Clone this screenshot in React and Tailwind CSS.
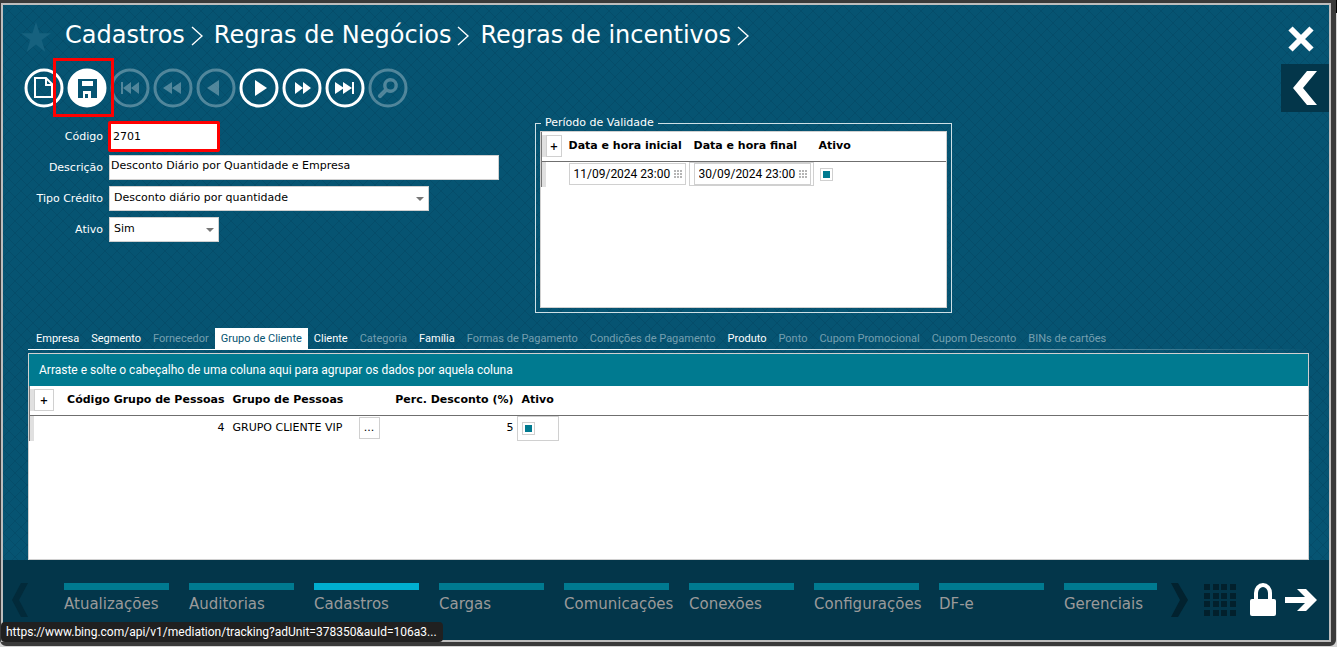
import { useState } from 'react';

const navItems = [
  'Atualizações', 'Auditorias', 'Cadastros', 'Cargas', 'Comunicações',
  'Conexões', 'Configurações', 'DF-e', 'Gerenciais',
];

const tabs = [
  { label: 'Empresa', enabled: true },
  { label: 'Segmento', enabled: true },
  { label: 'Fornecedor', enabled: false },
  { label: 'Grupo de Cliente', enabled: true },
  { label: 'Cliente', enabled: true },
  { label: 'Categoria', enabled: false },
  { label: 'Família', enabled: true },
  { label: 'Formas de Pagamento', enabled: false },
  { label: 'Condições de Pagamento', enabled: false },
  { label: 'Produto', enabled: true },
  { label: 'Ponto', enabled: false },
  { label: 'Cupom Promocional', enabled: false },
  { label: 'Cupom Desconto', enabled: false },
  { label: 'BINs de cartões', enabled: false },
];

const toolbar = [
  { id: 'first', label: 'Primeiro', enabled: false, d: 'M11 14h2v12h-2zM21 14v12l-8-6zM29 14v12l-8-6z' },
  { id: 'fastBack', label: 'Retroceder', enabled: false, d: 'M19 14v12l-9-6zM28 14v12l-9-6z' },
  { id: 'prev', label: 'Anterior', enabled: false, d: 'M23 12v16l-12-8z' },
  { id: 'next', label: 'Próximo', enabled: true, d: 'M16 12v16l12-8z' },
  { id: 'fastForward', label: 'Avançar', enabled: true, d: 'M13 14v12l8-6zM21 14v12l8-6z' },
  { id: 'last', label: 'Último', enabled: true, d: 'M10 14v12l9-6zM18 14v12l9-6zM27 14h2v12h-2z' },
];

const labelClass = 'text-right text-[11px] leading-4 text-white';
const fieldClass = 'block h-[25px] border border-[#d0d0d0] bg-white text-[11px] text-black focus:outline-none';
const plusClass = 'flex h-[22px] items-center justify-center border border-[#d0d0d0] bg-white text-[10px]';

function Hatch() {
  return (
    <svg className="absolute inset-0 h-full w-full" aria-hidden="true">
      <defs>
        <pattern id="hatch" width="12" height="12" patternUnits="userSpaceOnUse">
          <path d="M0 0l12 12M12 0L0 12" stroke="#054d6a" strokeWidth="1" />
        </pattern>
      </defs>
      <rect width="100%" height="100%" fill="url(#hatch)" />
    </svg>
  );
}

function Crumb({ children }) {
  return (
    <li className="flex items-center gap-1.5">
      <a href="#crumb">{children}</a>
      <svg width="12" height="20" viewBox="0 0 12 20" fill="none" stroke="white" className="mt-0.5" aria-hidden="true">
        <path d="M1 1l10 9L1 19" strokeWidth="1.4" />
      </svg>
    </li>
  );
}

function Circle({ label, enabled = true, solid = false, children }) {
  return (
    <button type="button" aria-label={label} disabled={!enabled} className={`block ${enabled ? 'text-white' : 'text-white/30'}`}>
      <svg width="40" height="40" viewBox="0 0 40 40" fill="currentColor" aria-hidden="true">
        <circle cx="20" cy="20" r="18" fill={solid ? 'white' : 'none'} stroke="currentColor" strokeWidth="3" />
        {children}
      </svg>
    </button>
  );
}

function Check({ label }) {
  const [on, setOn] = useState(true);
  return (
    <input
      type="checkbox"
      aria-label={label}
      checked={on}
      onChange={() => setOn(!on)}
      className="block h-[13px] w-[13px] appearance-none border border-[#d0d0d0] bg-white bg-clip-content p-[2px] checked:bg-[#007a90]"
    />
  );
}

function Select({ id, options, width }) {
  return (
    <div className={`relative ${width}`}>
      <select id={id} className={`w-full appearance-none pl-1 ${fieldClass}`}>
        {options.map((o) => <option key={o}>{o}</option>)}
      </select>
      <svg width="8" height="4" viewBox="0 0 8 4" className="pointer-events-none absolute right-[5px] top-[11px]" aria-hidden="true">
        <path d="M0 0h8L4 4z" fill="#777" />
      </svg>
    </div>
  );
}

function DateField({ label, value }) {
  return (
    <div className="flex h-[22px] w-[117px] items-center justify-between border border-[#d0d0d0] bg-white pl-1 pr-[3px]">
      <input aria-label={label} defaultValue={value} className="w-[98px] font-['Roboto',sans-serif] text-[12px] focus:outline-none" />
      <svg width="8" height="8" viewBox="0 0 8 8" fill="#b5b5b5" aria-hidden="true">
        <path d="M0 0h2v2H0zM3 0h2v2H3zM6 0h2v2H6zM0 3h2v2H0zM3 3h2v2H3zM6 3h2v2H6zM0 6h2v2H0zM3 6h2v2H3zM6 6h2v2H6z" />
      </svg>
    </div>
  );
}

function Header() {
  return (
    <header className="flex items-start justify-between pb-[11px] pl-[18px]">
      <div className="flex items-center pt-3">
        <svg width="30" height="30" viewBox="0 0 30 30" className="mt-1" aria-hidden="true">
          <path d="M15 0l3.600 11.200H30l-9.300 6.800L24.300 30 15 22.500 5.700 30l3.600-12L0 11.200h11.400z" fill="#16617e" />
        </svg>
        <ol className="flex gap-[11px] pl-3.5 text-[24px] leading-9 text-white">
          <Crumb>Cadastros</Crumb>
          <Crumb>Regras de Negócios</Crumb>
          <Crumb>Regras de incentivos</Crumb>
        </ol>
      </div>
      <button type="button" aria-label="Fechar" className="mr-[15px] mt-[21px]">
        <svg width="26" height="26" viewBox="0 0 26 26" stroke="white" strokeWidth="6" aria-hidden="true">
          <path d="M2.500 2.500l21 21M23.500 2.500l-21 21" />
        </svg>
      </button>
    </header>
  );
}

function Toolbar() {
  return (
    <div className="flex items-center justify-between pl-[21px]">
      <div className="flex gap-[3px]">
        <Circle label="Novo">
          <path d="M11 10h11l6 6v13H11zM22 10v7h6" fill="none" stroke="white" strokeWidth="2" />
        </Circle>
        <div className="relative">
          <Circle label="Salvar" solid>
            <path d="M11 11h19v19H11z" fill="#065472" />
            <path d="M15 13h11v5H15zM16 23h8v7h-8z" fill="white" />
            <path d="M18 26h3v4h-3z" fill="#065472" />
          </Circle>
          <span className="pointer-events-none absolute -left-3.5 -top-2.5 h-[59px] w-[61px] border-[3px] border-[#ff0000]" />
        </div>
        {toolbar.map((t) => (
          <Circle key={t.id} label={t.label} enabled={t.enabled}><path d={t.d} /></Circle>
        ))}
        <Circle label="Pesquisar" enabled={false}>
          <path
            d="M22.500 10a7.500 7.500 0 1 1-3.600 14.100L13.500 29.500a2 2 0 0 1-3-3L16 21A7.500 7.500 0 0 1 22.500 10zM22.500 13.500a4 4 0 1 0 0 8 4 4 0 0 0 0-8z"
            fillRule="evenodd"
          />
        </Circle>
      </div>
      <button type="button" aria-label="Recolher" className="flex h-12 w-12 items-center justify-center bg-[#03364a]">
        <svg width="24" height="34" viewBox="0 0 24 34" fill="white" aria-hidden="true">
          <path d="M14 0h10L10 17l14 17H14L0 17z" />
        </svg>
      </button>
    </div>
  );
}

function RuleForm() {
  return (
    <form className="grid w-[471px] grid-cols-[75px_1fr] items-center gap-x-1.5 gap-y-1.5 pt-3">
      <label htmlFor="codigo" className={labelClass}>Código</label>
      <input id="codigo" defaultValue="2701" className="-my-[3px] -ml-px h-[31px] w-[112px] rounded-[2px] border-[3px] border-[#ff0000] bg-white pl-0.5 text-[11px] text-black focus:outline-none" />
      <label htmlFor="descricao" className={labelClass}>Descrição</label>
      <input id="descricao" defaultValue="Desconto Diário por Quantidade e Empresa" className={`w-full pb-1 pl-px ${fieldClass}`} />
      <label htmlFor="tipo" className={labelClass}>Tipo Crédito</label>
      <Select id="tipo" width="w-80" options={['Desconto diário por quantidade']} />
      <label htmlFor="ativo" className={labelClass}>Ativo</label>
      <Select id="ativo" width="w-[110px]" options={['Sim', 'Não']} />
    </form>
  );
}

function Validity() {
  return (
    <fieldset className="mt-[3px] w-[417px] border border-[#cfe0e6] px-1 pb-1">
      <legend className="ml-px px-1 text-[11px] leading-4 text-white">Período de Validade</legend>
      <div className="h-[177px] border border-[#d0d0d0] bg-white">
        <table className="w-full table-fixed text-left text-[11px]">
          <thead>
            <tr className="h-[29px] border-b border-[#6f6f6f]">
              <th className="w-[27px] border-l border-[#777] p-0">
                <div className="border-l-4 border-[#e0e0e0]">
                  <button type="button" aria-label="Adicionar período" className={`w-4 ${plusClass}`}>+</button>
                </div>
              </th>
              <th className="w-[125px] p-0">Data e hora inicial</th>
              <th className="w-[125px] p-0">Data e hora final</th>
              <th className="p-0">Ativo</th>
            </tr>
          </thead>
          <tbody>
            <tr className="h-[25px]">
              <td className="border-l border-[#777] p-0"><div className="h-[25px] border-l-4 border-[#e0e0e0]" /></td>
              <td className="p-0"><DateField label="Data e hora inicial" value="11/09/2024 23:00" /></td>
              <td className="p-0">
                <div className="-ml-[5px] w-[125px] border border-[#d0d0d0] pl-1">
                  <DateField label="Data e hora final" value="30/09/2024 23:00" />
                </div>
              </td>
              <td className="p-0 pl-px"><Check label="Período ativo" /></td>
            </tr>
          </tbody>
        </table>
      </div>
    </fieldset>
  );
}

function Tabs({ active, onSelect }) {
  return (
    <div>
      <div role="tablist" className="flex pl-0.5 font-['Roboto',sans-serif] text-[11px] leading-[21px]">
        {tabs.map((t) => {
          let color = t.enabled ? 'text-white' : 'text-white/45';
          if (t.label === active) color = 'bg-white text-[#065472]';
          return (
            <button
              key={t.label}
              type="button"
              role="tab"
              aria-selected={t.label === active}
              disabled={!t.enabled}
              onClick={() => onSelect(t.label)}
              className={`whitespace-nowrap px-1.5 ${color}`}
            >
              {t.label}
            </button>
          );
        })}
      </div>
      <div className="h-px bg-linear-to-r from-white from-50% to-transparent" />
    </div>
  );
}

function GroupGrid() {
  return (
    <div className="flex-1 border border-[#d0d0d0] bg-white">
      <p className="bg-[#007a90] px-2.5 font-['Roboto',sans-serif] text-[12px] leading-8 text-white">
        Arraste e solte o cabeçalho de uma coluna aqui para agrupar os dados por aquela coluna
      </p>
      <table className="w-full table-fixed text-left text-[11px]">
        <thead>
          <tr className="h-[29px] border-b border-[#6f6f6f]">
            <th className="w-[33px] border-l border-[#777] p-0">
              <div className="border-l-4 border-[#e0e0e0]">
                <button type="button" aria-label="Adicionar grupo" className={`w-5 ${plusClass}`}>+</button>
              </div>
            </th>
            <th className="w-[162px] whitespace-nowrap p-0 text-right">Código Grupo de Pessoas</th>
            <th className="w-[155px] p-0 pl-2">Grupo de Pessoas</th>
            <th className="w-[134px] whitespace-nowrap p-0 text-right">Perc. Desconto (%)</th>
            <th className="p-0 pl-2">Ativo</th>
          </tr>
        </thead>
        <tbody>
          <tr>
            <td className="border-l border-[#777] p-0"><div className="h-[25px] border-l-4 border-[#e0e0e0]" /></td>
            <td className="p-0 text-right">4</td>
            <td className="p-0 pl-2">
              <div className="flex items-center justify-between">
                GRUPO CLIENTE VIP
                <button type="button" aria-label="Escolher grupo" className="h-[22px] w-[21px] border border-[#d0d0d0]">...</button>
              </div>
            </td>
            <td className="p-0 text-right">5</td>
            <td className="p-0 pl-[3px]">
              <div className="flex h-[25px] w-[42px] items-center border border-[#d0d0d0] pl-1">
                <Check label="Grupo ativo" />
              </div>
            </td>
          </tr>
        </tbody>
      </table>
    </div>
  );
}

function Footer() {
  const [current, setCurrent] = useState('Cadastros');
  return (
    <footer className="flex h-20 items-start bg-[#03364a] pt-[23px]">
      <button type="button" aria-label="Anterior" className="ml-[9px]">
        <svg width="16" height="34" viewBox="0 0 16 34" fill="#022a3a" aria-hidden="true">
          <path d="M9 0h7L7 17l9 17H9L0 17z" />
        </svg>
      </button>
      <nav className="ml-9 flex min-w-0 flex-1 gap-5 overflow-hidden">
        {navItems.map((n) => (
          <a
            key={n}
            href="#modulo"
            onClick={() => setCurrent(n)}
            className={`w-[105px] shrink-0 border-t-[7px] pt-0.5 text-[15px] leading-6 text-[#9a9a9a] ${n === current ? 'border-[#00aed0]' : 'border-[#007a90]'}`}
          >
            {n}
          </a>
        ))}
      </nav>
      <div className="ml-3.5 mr-3 flex items-center">
        <button type="button" aria-label="Próximo">
          <svg width="17" height="34" viewBox="0 0 17 34" fill="#02222f" aria-hidden="true">
            <path d="M0 0h7l10 17L7 34H0l9-17z" />
          </svg>
        </button>
        <button type="button" aria-label="Aplicativos" className="ml-4">
          <svg width="32" height="32" viewBox="0 0 32 32" fill="#02202c" aria-hidden="true">
            <path d="M0 0h6v6H0zM9 0h6v6H9zM17 0h6v6h-6zM26 0h6v6h-6zM0 9h6v6H0zM9 9h6v6H9zM17 9h6v6h-6zM26 9h6v6h-6zM0 17h6v6H0zM9 17h6v6H9zM17 17h6v6h-6zM26 17h6v6h-6zM0 26h6v6H0zM9 26h6v6H9zM17 26h6v6h-6zM26 26h6v6h-6z" />
          </svg>
        </button>
        <button type="button" aria-label="Bloquear" className="ml-3.5">
          <svg width="26" height="34" viewBox="0 0 26 34" aria-hidden="true">
            <path d="M6 18V10a7 8 0 0 1 14 0v8" fill="none" stroke="white" strokeWidth="4" />
            <rect y="16" width="26" height="17" rx="2" fill="white" />
          </svg>
        </button>
        <button type="button" aria-label="Sair" className="ml-[9px]">
          <svg width="32" height="22" viewBox="0 0 32 22" fill="white" aria-hidden="true">
            <path d="M0 8h20L12 0h9l11 11-11 11h-9l8-8H0z" />
          </svg>
        </button>
      </div>
    </footer>
  );
}

export default function App() {
  const [tab, setTab] = useState('Grupo de Cliente');

  return (
    <div className="flex min-h-screen flex-col bg-linear-to-b from-black from-[13px] to-[#d5d5d5] to-[13px] pb-px pr-px font-['DejaVu_Sans',Verdana,sans-serif] text-black">
      <div className="relative flex flex-1 flex-col rounded-b-md border-b-4 border-l border-r-[5px] border-t-[3px] border-[#3a3a3a] bg-[#065472]">
        <div className="relative flex flex-1 flex-col border-2 border-[#bdbdbd]">
          <Hatch />
          <div className="relative flex flex-1 flex-col">
            <Header />
            <Toolbar />
            <div className="flex flex-1 flex-col pl-[25px] pr-5">
              <div className="flex items-start gap-[36px] pb-[15px]">
                <RuleForm />
                <Validity />
              </div>
              <Tabs active={tab} onSelect={setTab} />
              <div className="flex flex-1 flex-col pt-[3px]">
                <GroupGrid />
              </div>
            </div>
            <Footer />
          </div>
        </div>
        <div className="absolute bottom-0 left-0 rounded-sm bg-[#202020] pl-[5px] pr-1.5 font-['Roboto',sans-serif] text-[12px] leading-5 text-white">
          https://www.bing.com/api/v1/mediation/tracking?adUnit=378350&amp;auId=106a3...
        </div>
      </div>
    </div>
  );
}
